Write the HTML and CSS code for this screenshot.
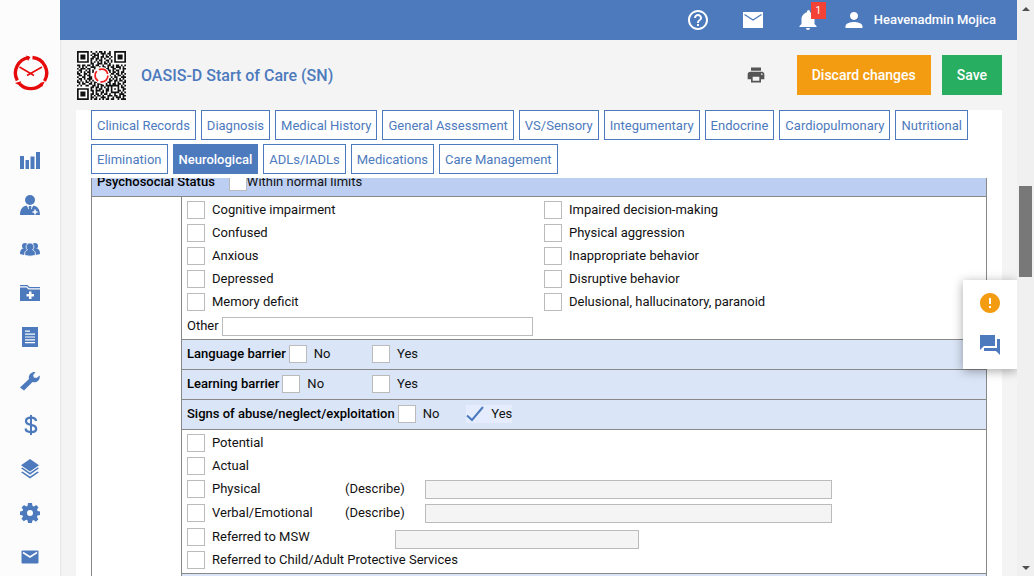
FILE: index.html
```html
<!DOCTYPE html>
<html lang="en">
<head>
<meta charset="utf-8">
<title>OASIS-D Start of Care (SN)</title>
<link rel="stylesheet" href="styles.css">
</head>
<body>
<div class="app">
  <nav class="sidebar" aria-label="Main menu">
    <a class="logo" href="#" aria-label="Home">
      <svg width="36" height="36" viewBox="0 0 36 36" fill="none" stroke="#e60a0a">
        <path stroke-width="3.4" d="M16 2.6A15.6 15.6 0 0 0 4.300 25.500M7 29.200A15.600 15.600 0 0 0 28.500 29.500M31.500 26A15.600 15.600 0 0 0 19.500 2.500"/>
        <path fill="#e60a0a" stroke="none" d="M13 .5L17.500 2 15 6zM2 28L8 26.200 7.500 31zM27 28L31.800 26.500 29 32z"/>
        <path stroke-width="1.500" d="M6.500 12L21 20.500M29 12L14 20.500"/>
      </svg>
    </a>
    <a class="side-link" href="#" aria-label="Dashboard"><svg width="20" height="20" viewBox="0 0 20 20"><path d="M0 5h4v13H0zM5.500 9h3.500v9H5.500zM10.500 5.500h4V18h-4zM16 1h4v17h-4z"/></svg></a>
    <a class="side-link" href="#" aria-label="Clinicians"><svg width="20" height="20" viewBox="0 0 20 20"><circle cx="10" cy="5" r="5"/><path d="M0 20c0-6 2.500-8.500 6.500-9.500L10 15l3.500-4.500C17.500 11.500 20 14 20 20z"/><path d="M9 11h2l1 2-2 3-2-3z"/><path fill="#fcfcfc" d="M7.200 10.600l1.800 2.600-.6 1.300zM12.800 10.600L11 13.200l.6 1.300zM14.200 14.500h1.600v1.700h1.700v1.600h-1.700v1.700h-1.600v-1.700h-1.700v-1.600h1.700z"/></svg></a>
    <a class="side-link" href="#" aria-label="Patients"><svg width="20" height="20" viewBox="0 0 20 20"><circle cx="5" cy="7" r="3"/><circle cx="15" cy="7" r="3"/><path d="M0 15c0-4 1.500-5.500 4-5.500h12c2.500 0 4 1.500 4 5.500l-4 1H4z"/><path stroke="#fcfcfc" stroke-width=".8" d="M4.500 16c0-3 1-4.500 3-5.200a3.900 3.900 0 1 1 5 0c2 .7 3 2.200 3 5.200-3 1.500-8 1.500-11 0z"/></svg></a>
    <a class="side-link" href="#" aria-label="Medical records"><svg width="20" height="20" viewBox="0 0 20 20"><path d="M0 2h7.500l2 2H20v1.300H9L7 3.300H0zM0 4.500h6.500l2 2H20V18H0z"/><path fill="#fcfcfc" d="M9 8.500h2.500V11H14v2.500h-2.500V16H9v-2.500H6.500V11H9z"/></svg></a>
    <a class="side-link" href="#" aria-label="Documents"><svg width="20" height="20" viewBox="0 0 20 20"><path d="M2 0h16v20H2z"/><path stroke="#fcfcfc" stroke-width="1.200" d="M5 4.200h5M5 7.200h10M5 10h10M5 12.800h10M5 15.600h10"/></svg></a>
    <a class="side-link" href="#" aria-label="Tools"><svg width="20" height="20" viewBox="0 0 20 20"><path d="M0 16.500L9 8C8 4.500 11 .5 15.500 1l-2.300 3 .6 2.400 2.700.6L19.700 4.500C20.500 9 16.500 12 12.500 11L4 19.500z"/></svg></a>
    <a class="side-link" href="#" aria-label="Billing"><svg width="20" height="20" viewBox="0 0 20 20"><path fill="none" stroke="#4d7abd" stroke-width="2.300" d="M16 6c0-2.200-2-3.300-5-3.300S6 4 6 6.200c0 2.400 2 3 5 3.600s5.200 1.300 5.200 3.900c0 2.200-2.200 3.400-5.200 3.400s-5.300-1.200-5.300-3.500"/><path d="M10 0h2v20h-2z"/></svg></a>
    <a class="side-link" href="#" aria-label="Layers"><svg width="20" height="20" viewBox="0 0 20 20"><path d="M10 0l9 6.200-9 6.300-9-6.300zM1 9.300l1.500-.8L10 13.700l7.500-5.200 1.500.8-9 6.400zM1 13.200l1.500-.8L10 17.600l7.500-5.200 1.500.8-9 6.400z"/></svg></a>
    <a class="side-link" href="#" aria-label="Settings"><svg width="20" height="20" viewBox="0 0 20 20"><path fill-rule="evenodd" d="M8 0h4l.5 3 1.400.6L16.300 2 18.500 4.500 17 6.600l.6 1.400 2.400.5v3.500l-2.500.5-.6 1.400 1.500 2.300-2.500 2.500-2.200-1.600-1.400.6L12 20H8l-.5-2.700-1.400-.6-2.300 1.600-2.400-2.500L3 13.700l-.6-1.400L0 12V8.500L2.500 8l.6-1.400L1.500 4.400 4 2l2.200 1.500L7.500 3zM10 7a3 3 0 1 0 0 6 3 3 0 0 0 0-6z"/></svg></a>
    <a class="side-link" href="#" aria-label="Messages"><svg width="20" height="20" viewBox="0 0 20 20"><rect x="1.500" y="3.500" width="17" height="13" rx="1"/><path fill="none" stroke="#fcfcfc" stroke-width="1.600" d="M3 5.500l7 4.500 7-4.500"/></svg></a>
  </nav>

  <main class="main">
    <header class="topbar">
      <a class="top-link" href="#" aria-label="Help"><svg width="24" height="24" viewBox="0 0 24 24"><path d="M11 18h2v-2h-2zm1-16C6.480 2 2 6.480 2 12s4.480 10 10 10 10-4.480 10-10S17.520 2 12 2zm0 18c-4.410 0-8-3.590-8-8s3.590-8 8-8 8 3.590 8 8-3.590 8-8 8zm0-14c-2.210 0-4 1.790-4 4h2c0-1.100.9-2 2-2s2 .9 2 2c0 2-3 1.750-3 5h2c0-2.250 3-2.500 3-5 0-2.210-1.790-4-4-4z"/></svg></a>
      <a class="top-link" href="#" aria-label="Inbox"><svg width="24" height="24" viewBox="0 0 24 24"><path d="M2 4h20v16H2z"/><path fill="none" stroke="#4d7abd" stroke-width="1.300" d="M3.500 6.500L12 12l8.500-5.500"/></svg></a>
      <a class="top-link bell" href="#" aria-label="Notifications"><svg width="24" height="24" viewBox="0 0 24 24"><path d="M12 22c1.100 0 2-.9 2-2h-4c0 1.100.9 2 2 2zm6.500-6v-5.500c0-3.070-1.630-5.640-4.500-6.320V3.500a1.500 1.500 0 0 0-3 0v.68C8.640 4.860 5.500 7.420 5.500 10.500V16l-2 2v1h17v-1z"/></svg><span class="badge">1</span></a>
      <a class="user" href="#"><svg width="24" height="24" viewBox="0 0 24 24"><path d="M12 12c2.300 0 4-1.900 4-4.200S14.300 4 12 4 8 5.500 8 7.800 9.700 12 12 12zm0 2c-3 0-8.500 1.300-8.500 4.200V20h17v-1.800C20.500 15.300 15 14 12 14z"/></svg><span>Heavenadmin Mojica</span></a>
    </header>

    <div class="titlebar">
      <svg class="qr" id="qr" viewBox="0 0 29 29" role="img" aria-label="QR code"></svg>
      <h1 class="title">OASIS-D Start of Care (SN)</h1>
      <button class="print" type="button" aria-label="Print"><svg width="20" height="20" viewBox="0 0 24 24"><path d="M19 8H5c-1.660 0-3 1.340-3 3v6h4v4h12v-4h4v-6c0-1.660-1.340-3-3-3zm-3 11H8v-5h8v5zm3-7c-.55 0-1-.45-1-1s.45-1 1-1 1 .45 1 1-.45 1-1 1zm-1-9H6v4h12V3z"/></svg></button>
      <button class="btn btn-discard" type="button">Discard changes</button>
      <button class="btn btn-save" type="button">Save</button>
    </div>

    <section class="panel">
      <nav class="tabs" aria-label="Assessment sections">
        <a class="tab" href="#">Clinical Records</a>
        <a class="tab" href="#">Diagnosis</a>
        <a class="tab" href="#">Medical History</a>
        <a class="tab" href="#">General Assessment</a>
        <a class="tab" href="#">VS/Sensory</a>
        <a class="tab" href="#">Integumentary</a>
        <a class="tab" href="#">Endocrine</a>
        <a class="tab" href="#">Cardiopulmonary</a>
        <a class="tab" href="#">Nutritional</a>
        <a class="tab" href="#">Elimination</a>
        <a class="tab tab-active" href="#" aria-current="page">Neurological</a>
        <a class="tab" href="#">ADLs/IADLs</a>
        <a class="tab" href="#">Medications</a>
        <a class="tab" href="#">Care Management</a>
      </nav>

      <div class="viewport">
        <form class="sheet">
          <div class="sheet-head">
            <strong>Psychosocial Status</strong>
            <label class="check check-tight"><input type="checkbox">Within normal limits</label>
          </div>
          <div class="sheet-body">
            <div class="block">
              <div class="columns">
                <div>
                  <label class="check line"><input type="checkbox">Cognitive impairment</label>
                  <label class="check line"><input type="checkbox">Confused</label>
                  <label class="check line"><input type="checkbox">Anxious</label>
                  <label class="check line"><input type="checkbox">Depressed</label>
                  <label class="check line"><input type="checkbox">Memory deficit</label>
                </div>
                <div>
                  <label class="check line"><input type="checkbox">Impaired decision-making</label>
                  <label class="check line"><input type="checkbox">Physical aggression</label>
                  <label class="check line"><input type="checkbox">Inappropriate behavior</label>
                  <label class="check line"><input type="checkbox">Disruptive behavior</label>
                  <label class="check line"><input type="checkbox">Delusional, hallucinatory, paranoid</label>
                </div>
              </div>
              <div class="other"><label for="other">Other</label><input class="field" id="other" type="text"></div>
            </div>

            <div class="question">
              <div class="ask"><strong>Language barrier</strong><label class="check"><input type="checkbox">No</label></div>
              <label class="check"><input type="checkbox">Yes</label>
            </div>
            <div class="question">
              <div class="ask"><strong>Learning barrier</strong><label class="check"><input type="checkbox">No</label></div>
              <label class="check"><input type="checkbox">Yes</label>
            </div>
            <div class="question question-wide">
              <div class="ask"><strong>Signs of abuse/neglect/exploitation</strong><label class="check"><input type="checkbox">No</label></div>
              <label class="check check-on"><input type="checkbox" checked>Yes</label>
            </div>

            <div class="block">
              <label class="check line"><input type="checkbox">Potential</label>
              <label class="check line"><input type="checkbox">Actual</label>
              <div class="line describe">
                <label class="check"><input type="checkbox">Physical</label>
                <label for="physical">(Describe)</label>
                <input class="field" id="physical" type="text" disabled>
              </div>
              <div class="line line-tall describe">
                <label class="check"><input type="checkbox">Verbal/Emotional</label>
                <label for="verbal">(Describe)</label>
                <input class="field" id="verbal" type="text" disabled>
              </div>
              <div class="line line-tall referral">
                <label class="check"><input type="checkbox">Referred to MSW</label>
                <input class="field" type="text" aria-label="MSW referral" disabled>
              </div>
              <label class="check line"><input type="checkbox">Referred to Child/Adult Protective Services</label>
            </div>
            <div class="question"></div>
          </div>
        </form>
      </div>
    </section>

    <aside class="float">
      <button type="button" aria-label="Alerts"><svg width="24" height="24" viewBox="0 0 24 24"><path fill="#f39c12" d="M12 2C6.480 2 2 6.480 2 12s4.480 10 10 10 10-4.480 10-10S17.520 2 12 2zm1 15h-2v-2h2v2zm0-4h-2V7h2v6z"/></svg></button>
      <button type="button" aria-label="Chat"><svg width="24" height="24" viewBox="0 0 24 24"><path fill="#4d7abd" d="M22 6h-3v9H6v3h12l4 4zM17 13V2H2v15l4-4z"/></svg></button>
    </aside>
  </main>

  <div class="scrollbar" aria-hidden="true">
    <span class="arrow arrow-up"></span>
    <span class="thumb"></span>
    <span class="arrow arrow-down"></span>
  </div>
</div>
<script src="script.js"></script>
</body>
</html>
```
FILE: styles.css
```css
* {
  box-sizing: border-box;
}

body {
  margin: 0;
  font: 13px/18px Roboto, "Liberation Sans", sans-serif;
  color: #111;
  background: #f4f4f4;
}

a {
  color: inherit;
  text-decoration: none;
}

button {
  border: 0;
  padding: 0;
  background: none;
  font: inherit;
}

svg {
  display: block;
}

strong {
  font-weight: 500;
  color: #000;
}

.app {
  display: flex;
  height: 100vh;
  overflow: hidden;
}

/* Left menu */
.sidebar {
  flex: 0 0 60px;
  overflow: hidden;
  background: #fcfcfc;
  box-shadow: 0 0 2px #ccc;
}

.logo {
  display: flex;
  justify-content: center;
  height: 139px;
  padding: 55px 0 0 2px;
}

.side-link {
  display: flex;
  align-items: center;
  justify-content: center;
  height: 44px;
  fill: #4d7abd;
}

.main {
  position: relative;
  display: flex;
  flex: 1;
  flex-direction: column;
  min-width: 0;
}

/* Top bar */
.topbar {
  display: flex;
  flex: 0 0 40px;
  align-items: center;
  justify-content: flex-end;
  padding: 0 21px 1px 0;
  color: #fff;
  background: #4d7abd;
  fill: #fff;
}

.top-link {
  margin-right: 31px;
}

.bell {
  position: relative;
  margin-right: 22px;
}

.badge {
  position: absolute;
  top: -6px;
  right: -6px;
  width: 15px;
  height: 17px;
  font-size: 10px;
  line-height: 17px;
  text-align: center;
  background: #f44336;
}

.user {
  display: flex;
  gap: 8px;
  align-items: center;
  font-weight: 500;
}

/* Title bar */
.titlebar {
  display: flex;
  flex: 0 0 70px;
  align-items: center;
  padding: 0 15px 0 17px;
}

.qr {
  width: 49px;
  height: 49px;
  background: #fff;
}

.title {
  flex: 1;
  margin: 0 0 0 15px;
  font-size: 16px;
  font-weight: 500;
  line-height: 21px;
  color: #4d7abd;
}

.print {
  margin-right: 31px;
  fill: #555;
}

.btn {
  height: 40px;
  padding: 0 15px;
  font-size: 14px;
  font-weight: 500;
  color: #fff;
}

.btn-discard {
  margin-right: 11px;
  background: #f39c12;
}

.btn-save {
  background: #27ae60;
}

/* Panel */
.panel {
  display: flex;
  flex: 1;
  flex-direction: column;
  min-height: 0;
  margin: 0 15px 0 16px;
  padding: 0 15px;
  background: #fff;
}

.tabs {
  display: flex;
  flex-wrap: wrap;
  gap: 4px 5px;
  padding-bottom: 4px;
}

.tab {
  height: 30px;
  padding: 0 5px;
  border: 1px solid #4d7abd;
  line-height: 29px;
  color: #4d7abd;
}

.tab-active {
  font-weight: 500;
  color: #fff;
  background: #4d7abd;
}

.viewport {
  flex: 1;
  min-height: 0;
  overflow: hidden;
}

/* Assessment sheet, scrolled slightly past its heading */
.sheet {
  margin-top: -12px;
  border: 1px solid #888;
}

.sheet-head {
  display: flex;
  gap: 14px;
  align-items: center;
  height: 30px;
  padding-left: 5px;
  border-bottom: 1px solid #888;
  background: #bccff3;
}

.sheet-body {
  margin-left: 89px;
  border-left: 1px solid #888;
}

.block {
  padding: 2px 0 1px 5px;
}

.columns {
  display: grid;
  grid-template-columns: 21fr 26fr;
}

.line {
  height: 23px;
  padding-bottom: 1px;
}

.line-tall {
  height: 24px;
  padding-bottom: 0;
}

.check {
  display: flex;
  gap: 7px;
  align-items: center;
}

.check-tight {
  gap: 0;
}

.check input {
  flex: none;
  width: 18px;
  height: 18px;
  margin: 0;
  border: 1px solid #bbb;
  background: #fff;
  appearance: none;
}

.check-on {
  background: #e4ecfd;
}

.check-on input {
  border: 0;
  background: url("data:image/svg+xml,%3Csvg xmlns='http://www.w3.org/2000/svg' viewBox='0 0 18 18'%3E%3Cpath d='M1 10.500l5 4.500L17 2' fill='none' stroke='%234d7abd' stroke-width='2'/%3E%3C/svg%3E");
}

.field {
  height: 19px;
  padding: 0 4px;
  border: 1px solid #bbb;
  font: inherit;
  background: #fff;
}

.field:disabled {
  background: #f4f4f4;
}

.other {
  display: flex;
  gap: 3px;
  align-items: center;
  height: 24px;
}

.other .field {
  width: 39%;
}

.question {
  display: flex;
  align-items: center;
  height: 30px;
  padding: 0 0 1px 5px;
  border-top: 1px solid #888;
  background: #dae5f7;
}

.ask {
  display: flex;
  gap: 3px;
  min-width: 185px;
}

.question-wide {
  gap: 27px;
  border-bottom: 1px solid #888;
  height: 31px;
}

.describe {
  display: grid;
  grid-template-columns: 158px 80px 51%;
  align-items: center;
}

.referral {
  display: grid;
  grid-template-columns: 208px 244px;
  align-items: center;
}

.referral .field {
  align-self: end;
}

/* Floating shortcuts over the page edge */
.float {
  position: absolute;
  top: 280px;
  right: 0;
  display: flex;
  flex-direction: column;
  gap: 18px;
  align-items: center;
  width: 54px;
  padding: 11px 0 12px;
  background: #fff;
  box-shadow: 0 2px 10px rgba(0, 0, 0, 0.35);
  clip-path: inset(-16px 0 -16px -16px);
}

/* Window scrollbar */
.scrollbar {
  display: flex;
  flex: 0 0 17px;
  flex-direction: column;
  align-items: center;
  padding: 7px 0 6px;
  background: #f0f0f0;
}

.arrow {
  border: 4px solid transparent;
}

.arrow-up {
  border-top: 0;
  border-bottom-color: #505050;
}

.arrow-down {
  margin-top: auto;
  border-bottom: 0;
  border-top-color: #505050;
}

.thumb {
  width: 13px;
  height: 91px;
  margin-top: 175px;
  background: #787878;
}
```
FILE: script.js
```js
// Module rows of the patient QR code.
const rows = [
  "#######.#..#.##.#..#..#######",
  "#.....#..##.#.###.##..#.....#",
  "#.###.#.#.###..#.#.#..#.###.#",
  "#.###.#..##.#.##.##.#.#.###.#",
  "#.###.#.##.##.#.#..#..#.###.#",
  "#.....#.#..#.##..##.#.#.....#",
  "#######.#.#.#.#.#.#.#.#######",
  "........##..###.##.#.........",
  "##.##.##.#.##..#..##.#.##.#.#",
  ".#.#.#..###..#.##.#.##.###.#.",
  "#.###.##..#.#.#..##..##..#.##",
  ".##..#.#.#........##.#.##..#.",
  "#.#.#.##.#.........#.##.#.##.",
  "##..##.#............##.##.#.#",
  ".##.#.##...........#..#.##.#.",
  "#..##..##...........#.##..###",
  ".##.#.###.........##.#.#.#.#.",
  "#.#..#.#.#.......#.##.##.##.#",
  "##.#.##.#.##.#.##.##..#.#..##",
  ".#.##..##.#.###..#.#.##.##.#.",
  "#.#..##..##.#.##.########.#.#",
  "........##.##.#.#.#.#...#.##.",
  "#######.#..#.##..##.#.#.#..##",
  "#.....#.##.###.#.##.#...##.#.",
  "#.###.#..#.#..##.#..#####.#.#",
  "#.###.#.##.##.#.##.#..#..###.",
  "#.###.#.#.#.##.#..###.##.#.##",
  "#.....#.##.#..###.#..#.###.#.",
  "#######.#.##.#.#.##.##..#.###"
];
let d = "";
rows.forEach((row, y) => {
  [...row].forEach((cell, x) => {
    if (cell === "#") d += `M${x} ${y}h1v1h-1z`;
  });
});
document.getElementById("qr").innerHTML =
  `<path fill="#111" d="${d}"/>` +
  '<circle cx="14.5" cy="14.5" r="5" fill="#fff"/>' +
  '<circle cx="14.5" cy="14.5" r="3.8" fill="none" stroke="#f02020" stroke-width="1" stroke-dasharray="6.5 1.4"/>';
```
